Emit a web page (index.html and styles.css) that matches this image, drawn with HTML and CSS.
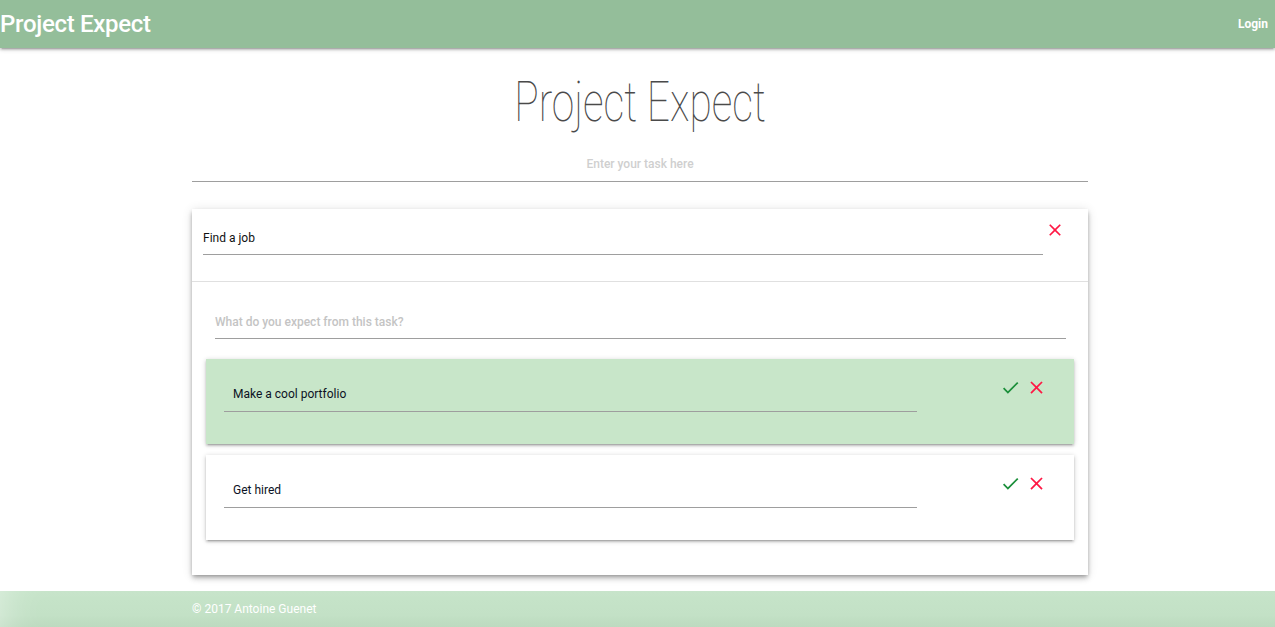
FILE: index.html
```html
<!DOCTYPE html>
<html lang="en">
<head>
<meta charset="utf-8">
<title>Project Expect</title>
<link rel="stylesheet" href="styles.css">
</head>
<body>
<nav class="navbar">
  <a class="brand" href="#">Project Expect</a>
  <a class="login" href="#">Login</a>
</nav>
<main class="container">
  <h1 class="title"><span class="title-text">Project Expect</span></h1>
  <input class="task-input" type="text" placeholder="Enter your task here">

  <section class="card">
    <div class="card-head">
      <input class="field head-field" type="text" value="Find a job">
      <button class="icon-btn close-btn" aria-label="delete task">
        <svg viewBox="0 0 24 24" class="icon x-icon"><path d="M19 6.41L17.59 5 12 10.59 6.41 5 5 6.41 10.59 12 5 17.59 6.41 19 12 13.41 17.59 19 19 17.59 13.41 12z"/></svg>
      </button>
    </div>
    <div class="card-body">
      <input class="field expect-field" type="text" placeholder="What do you expect from this task?">

      <div class="expect done">
        <input class="field expect-item" type="text" value="Make a cool portfolio">
        <div class="actions">
          <button class="icon-btn" aria-label="done">
            <svg viewBox="0 0 24 24" class="icon check-icon"><path d="M9 16.17L4.83 12l-1.42 1.41L9 19 21 7l-1.41-1.41z"/></svg>
          </button>
          <button class="icon-btn" aria-label="delete">
            <svg viewBox="0 0 24 24" class="icon x-icon"><path d="M19 6.41L17.59 5 12 10.59 6.41 5 5 6.41 10.59 12 5 17.59 6.41 19 12 13.41 17.59 19 19 17.59 13.41 12z"/></svg>
          </button>
        </div>
      </div>

      <div class="expect">
        <input class="field expect-item" type="text" value="Get hired">
        <div class="actions">
          <button class="icon-btn" aria-label="done">
            <svg viewBox="0 0 24 24" class="icon check-icon"><path d="M9 16.17L4.83 12l-1.42 1.41L9 19 21 7l-1.41-1.41z"/></svg>
          </button>
          <button class="icon-btn" aria-label="delete">
            <svg viewBox="0 0 24 24" class="icon x-icon"><path d="M19 6.41L17.59 5 12 10.59 6.41 5 5 6.41 10.59 12 5 17.59 6.41 19 12 13.41 17.59 19 19 17.59 13.41 12z"/></svg>
          </button>
        </div>
      </div>
    </div>
  </section>
</main>
<footer class="footer">
  <div class="footer-inner">© 2017 Antoine Guenet</div>
</footer>
</body>
</html>
```

FILE: styles.css
```css
* { box-sizing: border-box; }

html, body {
  margin: 0;
  padding: 0;
  background: #fff;
  font-family: Roboto, "Liberation Sans", Arial, sans-serif;
  overflow: hidden;
}

.navbar {
  height: 48px;
  background: #94be9a;
  display: flex;
  align-items: center;
  justify-content: space-between;
  padding: 0 7px 0 0;
  box-shadow: 0 2px 2px 0 rgba(0,0,0,.14), 0 3px 1px -2px rgba(0,0,0,.12), 0 1px 5px 0 rgba(0,0,0,.2);
  position: relative;
  z-index: 2;
}

.brand {
  color: #fff;
  text-decoration: none;
  font-size: 24px;
  font-weight: 500;
  letter-spacing: -0.3px;
}

.login {
  color: #fff;
  text-decoration: none;
  font-size: 12px;
  font-weight: 700;
}

.container {
  width: 896px;
  margin-left: 192px;
  display: flex;
  flex-direction: column;
}

.title {
  margin: 22px 0 0;
  text-align: center;
  font-weight: 100;
  font-size: 55px;
  line-height: 64px;
  color: #4a4a4a;
}

.title-text {
  display: inline-block;
  transform: scaleX(0.74);
  -webkit-font-smoothing: antialiased;
}

.task-input {
  margin-top: 19px;
  height: 29px;
  border: 0;
  border-bottom: 1px solid #9e9e9e;
  outline: none;
  text-align: center;
  font-family: inherit;
  font-size: 12px;
  font-weight: 500;
  padding: 0 0 6px;
  background: transparent;
}

.task-input::placeholder { color: #cfcfcf; }

.card {
  margin-top: 27px;
  background: #fff;
  box-shadow: 0 4px 5px 0 rgba(0,0,0,.14), 0 1px 10px 0 rgba(0,0,0,.12), 0 2px 4px -1px rgba(0,0,0,.3);
}

.card-head {
  display: flex;
  align-items: flex-start;
  padding: 11px 23px 26px 11px;
  border-bottom: 1px solid #e0e0e0;
}

.field {
  height: 29px;
  border: 0;
  border-bottom: 1px solid #9e9e9e;
  outline: none;
  font-family: inherit;
  font-size: 12px;
  color: #111;
  background: transparent;
  padding: 0 0 4px;
}

.field::placeholder { color: #c4c4c4; font-weight: 500; }

.head-field {
  flex: 1;
  margin-top: 6px;
}

.icon-btn {
  border: 0;
  background: transparent;
  padding: 0;
  margin: 0;
  display: flex;
  cursor: pointer;
}

.close-btn { margin-left: 2px; }

.icon { display: block; }

.close-btn .icon { width: 20px; height: 20px; }

.x-icon { fill: #ff1744; }
.check-icon { fill: #1b8f3a; }

.card-body {
  display: flex;
  flex-direction: column;
  padding: 28px 14px 35px;
}

.expect-field {
  margin: 0 8px 0 9px;
  padding-bottom: 4px;
}

.expect {
  display: flex;
  align-items: flex-start;
  padding: 18px 27px 32px 18px;
  margin-top: 11px;
  background: #fff;
  box-shadow: 0 2px 2px 0 rgba(0,0,0,.14), 0 3px 1px -2px rgba(0,0,0,.12), 0 1px 5px 0 rgba(0,0,0,.2);
}

.expect-field + .expect { margin-top: 20px; }

.expect.done { background: #c8e6c9; }

.expect-item {
  width: 693px;
  margin-top: 6px;
  padding-left: 9px;
  padding-bottom: 6px;
  color: #0c1224;
}

.actions {
  margin-left: auto;
  display: flex;
  gap: 5px;
}

.actions .icon { width: 21px; height: 21px; }

.footer {
  margin-top: 16px;
  height: 40px;
  background: linear-gradient(to bottom, #c6e4c9 0%, #c3e1c6 60%, #b9d8bc 100%);
  box-shadow: inset 30px 0 40px -30px rgba(255,255,255,.5);
}

.footer-inner {
  margin-left: 192px;
  padding-top: 11px;
  color: #fff;
  font-size: 12px;
  line-height: 14px;
}
```
